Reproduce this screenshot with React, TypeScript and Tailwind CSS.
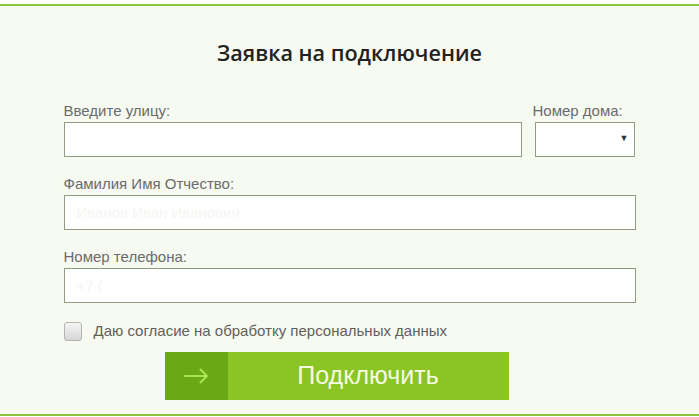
import React, { useState } from 'react';

const fieldClass =
  'block w-full h-[35px] bg-white border border-[#8f9c80] px-3 text-[15px] text-[#333] outline-none placeholder:text-[#f4f6f1]';

const labelClass = 'block h-[18px] leading-[18px] mb-[2px] text-[15px] text-[#6b6b6b]';

const App = () => {
  const [agree, setAgree] = useState(false);

  return (
    <div className="w-[699px] h-[417px] bg-white pt-[4px] font-['Liberation_Sans',Arial,sans-serif]">
      <section className="h-[412px] bg-[#f7faf1] border-t-2 border-b-2 border-[#8cc63f]">
        {/* Title */}
        <h2 className="pt-[32px] h-[62px] leading-[30px] text-center text-[21.6px] font-semibold text-[#222] font-['Open_Sans',sans-serif]">
          Заявка на подключение
        </h2>

        <form className="w-[572px] mx-auto mt-[34px]" onSubmit={(e) => e.preventDefault()}>
          {/* Street + house */}
          <div className="flex gap-[13px]">
            <div className="w-[458px]">
              <label className={labelClass}>Введите улицу:</label>
              <input type="text" className={fieldClass} />
            </div>
            <div className="w-[100px]">
              <label className={`${labelClass} -ml-[2px] whitespace-nowrap`}>Номер дома:</label>
              <div className="relative">
                <select className="block w-full h-[35px] bg-white border border-[#8f9c80] appearance-none outline-none" />
                <span className="absolute right-[6px] top-[12px] text-[9px] leading-none text-[#333] pointer-events-none">
                  ▼
                </span>
              </div>
            </div>
          </div>

          {/* Full name */}
          <div className="mt-[18px]">
            <label className={labelClass}>Фамилия Имя Отчество:</label>
            <input type="text" className={fieldClass} placeholder="Иванов Иван Иванович" />
          </div>

          {/* Phone */}
          <div className="mt-[18px]">
            <label className={labelClass}>Номер телефона:</label>
            <input type="text" className={fieldClass} placeholder="+7 (" />
          </div>

          {/* Consent */}
          <label className="flex items-center gap-[12px] mt-[19px] h-[19px] cursor-pointer">
            <span
              onClick={() => setAgree(!agree)}
              className="w-[18px] h-[19px] rounded-[3px] border border-[#b4b4b4] bg-gradient-to-b from-[#f4f4f4] to-[#d6d6d6] flex items-center justify-center text-[12px] text-[#555]"
            >
              {agree ? '✓' : ''}
            </span>
            <span className="text-[15px] text-[#5f5f5f]">Даю согласие на обработку персональных данных</span>
          </label>

          {/* Submit */}
          <button type="submit" className="flex ml-[101px] mt-[11px] w-[344px] h-[48px]">
            <span className="w-[63px] h-full bg-[#6aa816] flex items-center justify-center">
              <svg width="26" height="16" viewBox="0 0 26 16" fill="none" stroke="#a9e553" strokeWidth="2">
                <path d="M1 8h23M17 1l7 7-7 7" />
              </svg>
            </span>
            <span className="flex-1 h-full bg-[#8bc425] flex items-center justify-center text-[25px] text-[#f4fbe3]">
              Подключить
            </span>
          </button>
        </form>
      </section>
    </div>
  );
};

export default App;
